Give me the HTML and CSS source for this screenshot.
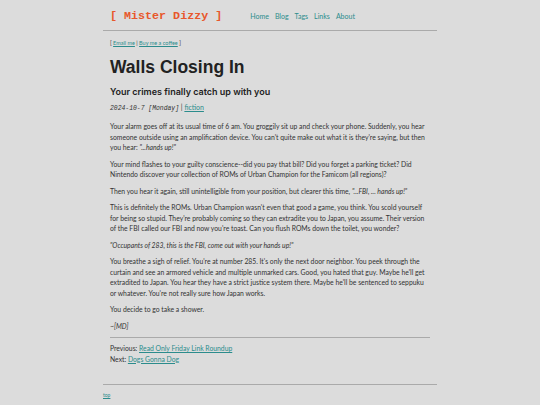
FILE: index.html
```html
<!DOCTYPE html>
<html>
<head>
<meta charset="utf-8">
<link rel="stylesheet" href="styles.css">
</head>
<body>
<div class="wrap">
  <header class="site-header">
    <a class="brand" href="#">[ Mister Dizzy ]</a>
    <nav class="nav">
      <a href="#">Home</a>
      <a href="#">Blog</a>
      <a href="#">Tags</a>
      <a href="#">Links</a>
      <a href="#">About</a>
    </nav>
  </header>
  <main class="main">
    <div class="contact">[ <a href="#">Email me</a> | <a href="#">Buy me a coffee</a> ]</div>
    <h1 class="title">Walls Closing In</h1>
    <h2 class="subtitle">Your crimes finally catch up with you</h2>
    <div class="meta"><span class="date">2024-10-7 [Monday]</span> | <a href="#">fiction</a></div>
    <article class="post">
      <p>Your alarm goes off at its usual time of 6 am. You groggily sit up and check your phone. Suddenly, you hear someone outside using an amplification device. You can't quite make out what it is they're saying, but then you hear: <em>"...hands up!"</em></p>
      <p>Your mind flashes to your guilty conscience--did you pay that bill? Did you forget a parking ticket? Did Nintendo discover your collection of ROMs of Urban Champion for the Famicom (all regions)?</p>
      <p>Then you hear it again, still unintelligible from your position, but clearer this time, <em>"...FBI, ... hands up!"</em></p>
      <p>This is definitely the ROMs. Urban Champion wasn't even that good a game, you think. You scold yourself for being so stupid. They're probably coming so they can extradite you to Japan, you assume. Their version of the FBI called our FBI and now you're toast. Can you flush ROMs down the toilet, you wonder?</p>
      <p><em>"Occupants of 283, this is the FBI, come out with your hands up!"</em></p>
      <p>You breathe a sigh of relief. You're at number 285. It's only the next door neighbor. You peek through the curtain and see an armored vehicle and multiple unmarked cars. Good, you hated that guy. Maybe he'll get extradited to Japan. You hear they have a strict justice system there. Maybe he'll be sentenced to seppuku or whatever. You're not really sure how Japan works.</p>
      <p>You decide to go take a shower.</p>
      <p><em>~[MD]</em></p>
    </article>
    <hr class="rule-inner">
    <div class="pager">
      <div>Previous: <a href="#">Read Only Friday Link Roundup</a></div>
      <div>Next: <a href="#">Dogs Gonna Dog</a></div>
    </div>
  </main>
  <footer class="site-footer">
    <a href="#">top</a>
  </footer>
</div>
</body>
</html>
```
FILE: styles.css
```css
html, body {
  margin: 0;
  padding: 0;
  background: #dcdcdc;
}
body {
  font-family: "Lato", "Liberation Sans", sans-serif;
  color: #333;
  font-size: 6.8px;
  line-height: 10.5px;
}
a {
  color: #2b8c8c;
}
.wrap {
  width: 334px;
  margin: 0 auto;
}
.site-header {
  display: flex;
  align-items: center;
  padding: 9px 7px 7px;
  border-bottom: 1px solid #aaa;
}
.brand {
  font-family: "Liberation Mono", monospace;
  font-weight: bold;
  font-size: 11.7px;
  color: #e8572b;
  text-decoration: none;
  line-height: 14px;
}
.nav {
  display: flex;
  gap: 6px;
  margin-left: 28px;
  font-size: 7px;
}
.nav a {
  text-decoration: none;
  color: #2b8c8c;
}
.main {
  padding: 0 7px;
}
.contact {
  font-size: 5.5px;
  margin-top: 7px;
}
.title {
  font-family: "Liberation Sans", sans-serif;
  font-size: 17.5px;
  font-weight: bold;
  margin: 8px 0 0;
  line-height: 21px;
  color: #222;
}
.subtitle {
  font-family: "Inter", "Liberation Sans", sans-serif;
  font-size: 9px;
  font-weight: 600;
  line-height: 13px;
  margin: 7px 0 0;
  color: #222;
}
.meta {
  margin-top: 4px;
  font-size: 7px;
}
.date {
  font-family: "Liberation Mono", monospace;
  font-style: italic;
  font-size: 6.4px;
}
.post p {
  margin: 6px 0;
}
.post {
  margin-top: 7px;
}
.rule-inner {
  border: 0;
  border-top: 1px solid #aaa;
  margin: 5px 0 5px;
}
.site-footer {
  border-top: 1px solid #aaa;
  margin-top: 20px;
  padding: 5px 0 10px;
  font-size: 5px;
}
```
